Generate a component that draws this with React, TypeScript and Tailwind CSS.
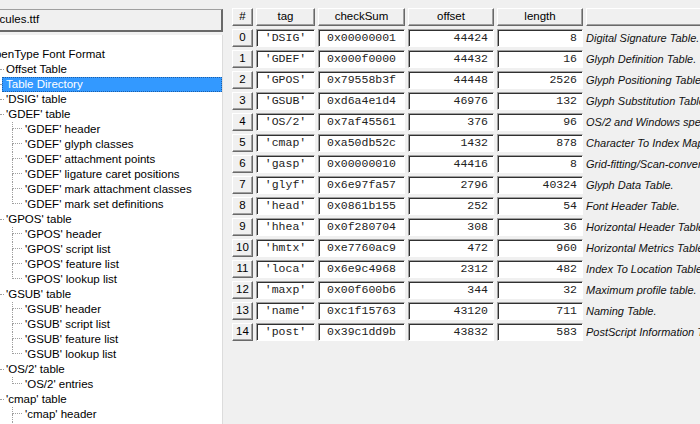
type Node = { label: string; depth: number; last?: boolean; selected?: boolean };

const tree: Node[] = [
  { label: "OpenType Font Format", depth: 0 },
  { label: "Offset Table", depth: 1 },
  { label: "Table Directory", depth: 1, selected: true },
  { label: "'DSIG' table", depth: 1 },
  { label: "'GDEF' table", depth: 1 },
  { label: "'GDEF' header", depth: 2 },
  { label: "'GDEF' glyph classes", depth: 2 },
  { label: "'GDEF' attachment points", depth: 2 },
  { label: "'GDEF' ligature caret positions", depth: 2 },
  { label: "'GDEF' mark attachment classes", depth: 2 },
  { label: "'GDEF' mark set definitions", depth: 2, last: true },
  { label: "'GPOS' table", depth: 1 },
  { label: "'GPOS' header", depth: 2 },
  { label: "'GPOS' script list", depth: 2 },
  { label: "'GPOS' feature list", depth: 2 },
  { label: "'GPOS' lookup list", depth: 2, last: true },
  { label: "'GSUB' table", depth: 1 },
  { label: "'GSUB' header", depth: 2 },
  { label: "'GSUB' script list", depth: 2 },
  { label: "'GSUB' feature list", depth: 2 },
  { label: "'GSUB' lookup list", depth: 2, last: true },
  { label: "'OS/2' table", depth: 1 },
  { label: "'OS/2' entries", depth: 2, last: true },
  { label: "'cmap' table", depth: 1 },
  { label: "'cmap' header", depth: 2 },
  { label: "'cmap' subtables", depth: 2 },
];

const rows = [
  ["'DSIG'", "0x00000001", "44424", "8", "Digital Signature Table."],
  ["'GDEF'", "0x000f0000", "44432", "16", "Glyph Definition Table."],
  ["'GPOS'", "0x79558b3f", "44448", "2526", "Glyph Positioning Table."],
  ["'GSUB'", "0xd6a4e1d4", "46976", "132", "Glyph Substitution Table."],
  ["'OS/2'", "0x7af45561", "376", "96", "OS/2 and Windows specific metrics."],
  ["'cmap'", "0xa50db52c", "1432", "878", "Character To Index Mapping Table."],
  ["'gasp'", "0x00000010", "44416", "8", "Grid-fitting/Scan-conversion."],
  ["'glyf'", "0x6e97fa57", "2796", "40324", "Glyph Data Table."],
  ["'head'", "0x0861b155", "252", "54", "Font Header Table."],
  ["'hhea'", "0x0f280704", "308", "36", "Horizontal Header Table."],
  ["'hmtx'", "0xe7760ac9", "472", "960", "Horizontal Metrics Table."],
  ["'loca'", "0x6e9c4968", "2312", "482", "Index To Location Table."],
  ["'maxp'", "0x00f600b6", "344", "32", "Maximum profile table."],
  ["'name'", "0xc1f15763", "43120", "711", "Naming Table."],
  ["'post'", "0x39c1dd9b", "43832", "583", "PostScript Information Table."],
];

const raised =
  "border border-t-white border-l-white border-r-[#696969] border-b-[#696969] shadow-[inset_-1px_-1px_0_#a0a0a0] bg-[#f0f0f0]";
const sunken =
  "border border-t-[#a0a0a0] border-l-[#a0a0a0] border-r-white border-b-white shadow-[inset_1px_1px_0_#303030] bg-white";

function TreeRow({ node }: { node: Node }) {
  if (node.depth === 0) {
    return (
      <div className="h-[15px] flex items-center whitespace-nowrap ml-[-14px]">{node.label}</div>
    );
  }
  if (node.depth === 1) {
    return (
      <div className="h-[15px] flex items-center">
        <div className="w-[2px] h-full flex flex-col">
          <div className="h-[7px]" />
          <div className="w-[4px] border-t border-dotted border-[#a0a0a0]" />
        </div>
        <div
          className={
            node.selected
              ? "flex-1 h-full flex items-center pl-[4px] bg-[#3399ff] text-white outline outline-1 outline-dotted outline-[#1e5fa8] -outline-offset-1"
              : "flex-1 h-full flex items-center pl-[4px]"
          }
        >
          {node.label}
        </div>
      </div>
    );
  }
  return (
    <div className="h-[15px] flex items-center">
      <div className="w-[12px]" />
      <div className="w-[10px] h-full flex flex-col">
        <div className="h-[7px] border-l border-b border-dotted border-[#a0a0a0]" />
        <div className={node.last ? "flex-1" : "flex-1 border-l border-dotted border-[#a0a0a0]"} />
      </div>
      <div className="pl-[3px] whitespace-nowrap">{node.label}</div>
    </div>
  );
}

export default function App() {
  return (
    <div className="w-[700px] h-[424px] overflow-hidden bg-[#f0f0f0] flex font-['Liberation_Sans',Arial,sans-serif] text-[11.5px] text-black">
      <div className="w-[223px] h-full flex flex-col shrink-0">
        <div className="h-[35px] pt-[9px] pb-[3px]">
          <div className="h-[23px] flex items-center border-t border-t-[#a0a0a0] border-r-2 border-b-2 border-r-[#696969] border-b-[#696969] bg-[#f0f0f0] overflow-hidden">
            <span className="ml-[-19px] whitespace-nowrap">Hercules.ttf</span>
          </div>
        </div>
        <div className="flex-1 bg-white border-r border-r-[#dcdcdc] pt-[12px] overflow-hidden">
          {tree.map((n, i) => (
            <TreeRow key={i} node={n} />
          ))}
        </div>
      </div>

      <div className="ml-[9px] pt-[8px] flex flex-col gap-[3px] whitespace-nowrap">
        <div className="flex gap-[3px] h-[18px]">
          <div className={`w-[21px] flex items-center justify-center ${raised}`}>#</div>
          <div className={`w-[59px] flex items-center justify-center ${raised}`}>tag</div>
          <div className={`w-[87px] flex items-center justify-center ${raised}`}>checkSum</div>
          <div className={`w-[86px] flex items-center justify-center ${raised}`}>offset</div>
          <div className={`w-[86px] flex items-center justify-center ${raised}`}>length</div>
          <div className={`w-[130px] ${raised}`} />
        </div>
        {rows.map((r, i) => (
          <div key={i} className="flex gap-[3px] h-[18px]">
            <div className={`w-[21px] flex items-center justify-center ${raised}`}>{i}</div>
            <div
              className={`w-[59px] flex items-center justify-center font-['Liberation_Mono','Courier_New',monospace] text-[11.5px] text-[#222] ${sunken}`}
            >
              {r[0]}
            </div>
            <div
              className={`w-[87px] flex items-center justify-center font-['Liberation_Mono','Courier_New',monospace] text-[11.5px] text-[#222] ${sunken}`}
            >
              {r[1]}
            </div>
            <div
              className={`w-[86px] flex items-center justify-end pr-[5px] font-['Liberation_Mono','Courier_New',monospace] text-[11.5px] text-[#222] ${sunken}`}
            >
              {r[2]}
            </div>
            <div
              className={`w-[86px] flex items-center justify-end pr-[5px] font-['Liberation_Mono','Courier_New',monospace] text-[11.5px] text-[#222] ${sunken}`}
            >
              {r[3]}
            </div>
            <div className="flex items-center italic text-[11px] text-[#111]">{r[4]}</div>
          </div>
        ))}
      </div>
    </div>
  );
}
